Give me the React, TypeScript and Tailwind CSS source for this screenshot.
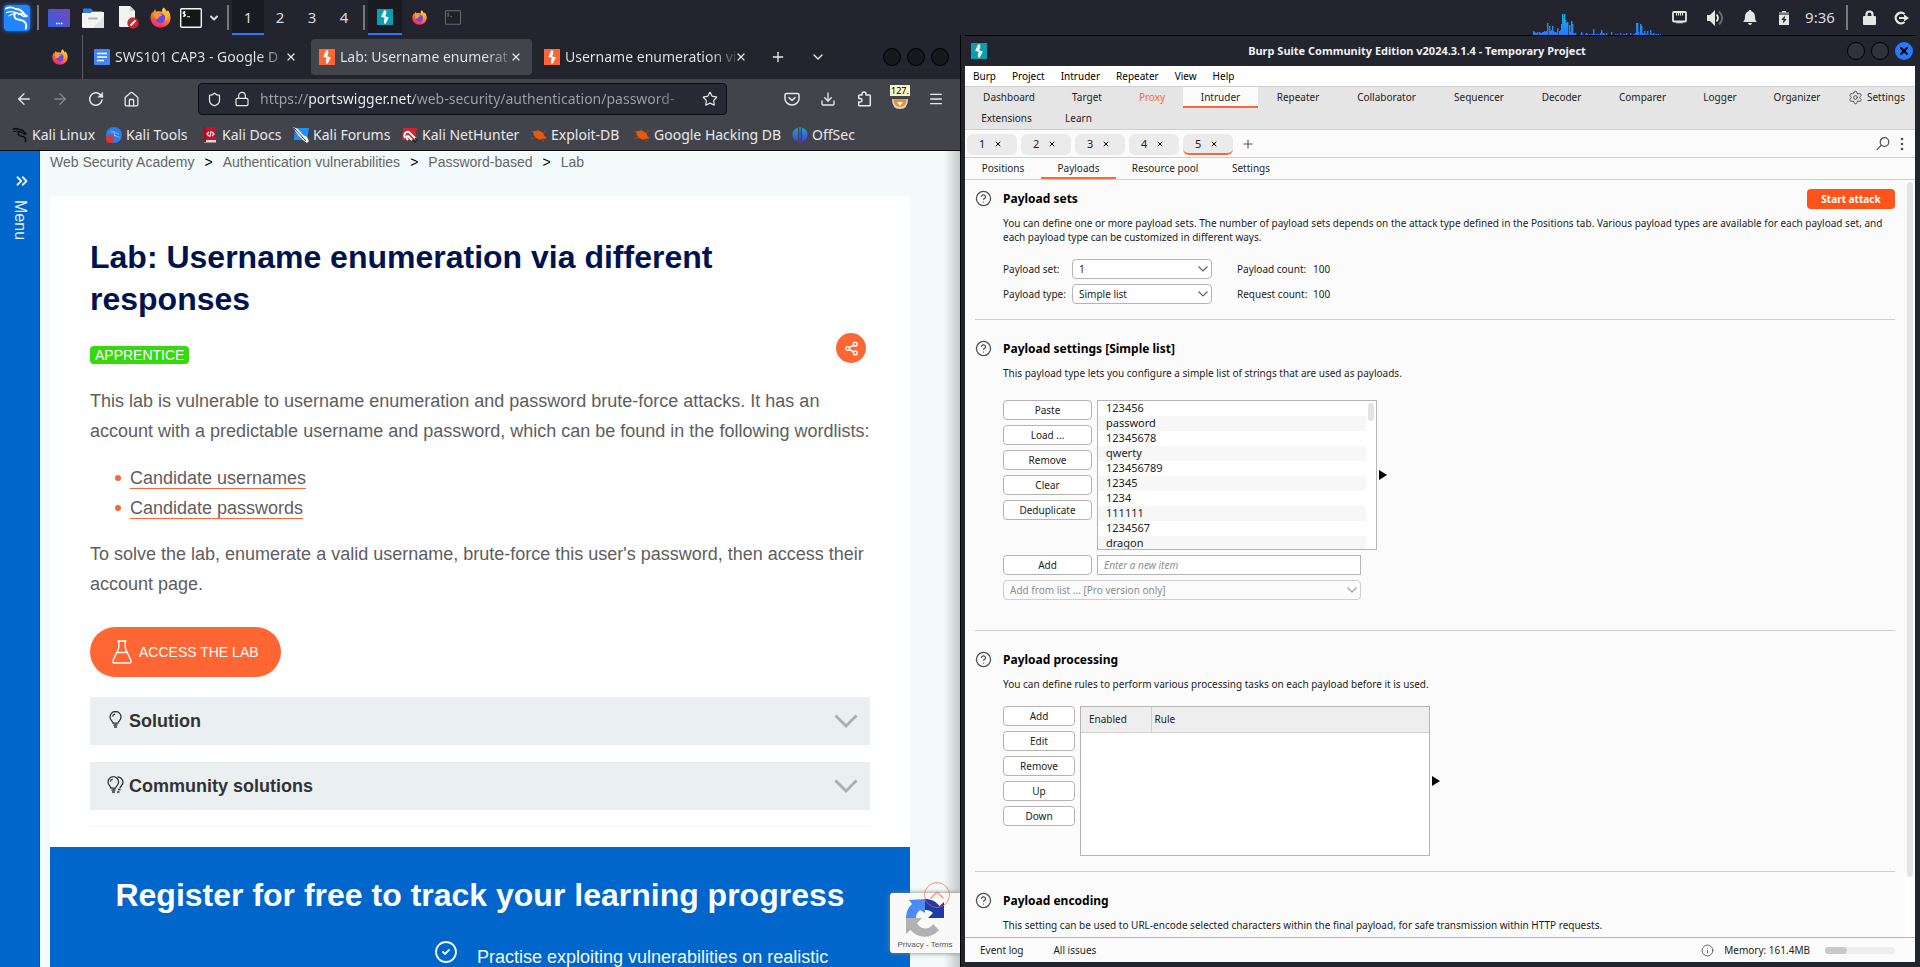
import React from "react";
import { SiKalilinux } from "react-icons/si";
import {
  ArrowLeft, ArrowRight, ChevronDown, ChevronUp, ChevronsRight, CircleCheck, CircleHelp,
  Download, House, Info, Lock, Menu, Plus, Settings, Share2, Shield, Star, X,
} from "lucide-react";

/* ---------- shared drawings ---------- */

function FirefoxLogo({ className }: { className: string }) {
  return (
    <svg viewBox="0 0 24 24" className={className} aria-hidden="true">
      <defs>
        <linearGradient id="ffFlame" x1="0.8" y1="0" x2="0.3" y2="1">
          <stop offset="0" stopColor="#ffe14d" />
          <stop offset="0.45" stopColor="#ff8a26" />
          <stop offset="0.8" stopColor="#ff3f4a" />
          <stop offset="1" stopColor="#e3248c" />
        </linearGradient>
      </defs>
      <path d="M15.5 0.5c2 1.5 3 3 3.4 4.6 1-.1 1.300-.9 1.300-1.700 2 2.200 3.300 5.600 3.300 9C23.500 18.800 18.300 23.600 12 23.600 5.500 23.600.6 18.600.6 12.400c0-2.600.9-5.200 2.200-6.900l.4 1.700C4 5 5.300 3.300 6.300 2.700c-.2 1 .1 2 .8 2.600 2.500-.6 5-.4 6.700.5C13.400 3.800 14 1.800 15.500.5z" fill="url(#ffFlame)" />
      <circle cx="12" cy="13" r="5.600" fill="#6a48e8" />
      <path d="M4.500 8.500c2-1.500 4-1.600 5.800-.6l2.600.7c.8.300.6 1.200 0 1.500l-2.200 1.100c-1 .7-.7 1.800-2.200 2.400-1 .4-2 0-2.600-.5z" fill="#ff9a2c" />
      <path d="M17 8c1.500 2.500 1 6-1 8 3-1 5-4 4.300-8z" fill="#ffb52e" />
    </svg>
  );
}

function BurpLogo({ className, color }: { className: string; color: string }) {
  return (
    <svg viewBox="0 0 16 16" className={className} aria-hidden="true">
      <rect width="16" height="16" fill={color} />
      <path d="M7 1.500h2.200v3.700L8 7.200l3.800 1.300L8.800 14.500H7v-3.700l1-1.800-3.800-1.300z" fill="#fff" />
    </svg>
  );
}

function DocsLogo() {
  return (
    <svg viewBox="0 0 16 16" className="size-4 shrink-0" aria-hidden="true">
      <rect width="16" height="16" rx="1" fill="#4285f4" />
      <path d="M3 4.500h10M3 8h10M3 11.500h7" stroke="#fff" strokeWidth="1.700" />
    </svg>
  );
}

/* ---------- desktop panel ---------- */

const load = [4, 3, 2, 2, 3, 3, 2, 2, 3, 3, 4, 3, 4, 12, 9, 4, 5, 9, 4, 3, 3, 2, 7, 4, 5, 11, 21, 17, 21, 15, 12, 13, 10, 3, 14, 11, 2, 1, 2, 0, 0, 0, 1, 3, 1, 0, 0, 1, 2, 1, 1, 0, 1, 1, 6, 1, 0, 1, 0, 1, 2, 5, 1, 2, 1, 0, 2, 0, 0, 0, 3, 0, 0, 0, 1, 0, 1, 0, 2, 0, 0, 1, 1, 0, 2, 0, 0, 2, 0, 0, 1, 1, 2, 12, 12, 3, 11, 9, 2, 1, 4, 1, 1, 4, 0, 5, 1, 1, 2, 0, 1, 1, 0, 1, 1];

function LoadGraph() {
  return (
    <svg viewBox="0 0 128 24" className="h-6 w-32 self-end" aria-hidden="true">
      <defs>
        <linearGradient id="loadFill" gradientUnits="userSpaceOnUse" x1="0" y1="24" x2="0" y2="2">
          <stop offset="0" stopColor="#2777ff" />
          <stop offset="1" stopColor="#12b7e6" />
        </linearGradient>
      </defs>
      {load.map((h, i) => (
        <rect key={i} x={Math.round(i * 1.11)} y={24 - h} width="1.400" height={h} fill="url(#loadFill)" />
      ))}
    </svg>
  );
}

function PanelDivider({ className }: { className: string }) {
  return <span className={`h-[25px] w-0.5 shrink-0 bg-[#77787d] ${className}`} />;
}

function TerminalIcon({ className, bright }: { className: string; bright: boolean }) {
  const c = bright ? "#f4f4f4" : "#6b6c72";
  return (
    <svg viewBox="0 0 22 20" className={className} aria-hidden="true">
      <rect x="0.700" y="0.700" width="20.600" height="18.600" rx="1" fill={bright ? "#16171b" : "#202127"} stroke={c} strokeWidth="1.400" />
      <path d="M5.500 4.200C4.500 3.800 3 4 3 5s2.500.8 2.500 1.900S4 8.300 3 7.900M4.300 3v6M7 8.800h3" stroke={c} strokeWidth="1.100" fill="none" />
    </svg>
  );
}

function DesktopPanel() {
  return (
    <header className="flex h-[35px] shrink-0 items-center bg-[#23242e] text-[15px] text-[#dadbe0]">
      <button aria-label="Applications" className="ml-1 flex size-[26px] items-center justify-center rounded-sm bg-[#1f86ff] shadow-[0_0_4px_#2777ff]">
        <svg viewBox="0 0 26 26" className="size-[26px]" fill="none" stroke="#fff" strokeLinecap="round" strokeLinejoin="round" aria-hidden="true">
          <path d="M2 3.500c3-1.500 7-1 9.500.5 3.500 0 7 2 9 5.500l2.500 1.500-2.800.3" strokeWidth="1.800" />
          <path d="M2.500 7.500c3-1.200 6-1.200 9 0 4 .8 6.500 2.500 8 4" strokeWidth="1.300" />
          <path d="M5 11c2-1.800 4-2.300 6-1.800" strokeWidth="1.100" />
          <path d="M11 8c-1.500 3-.5 6 3 6.500 4 .5 7 1.500 8 4.500.5 1.500.3 3-.2 4.500" strokeWidth="2" />
          <path d="M20.500 10c-1.500-1.500-4-2-6-.5" strokeWidth="1.500" />
        </svg>
      </button>
      <PanelDivider className="ml-[7px]" />
      <button aria-label="Show desktop" className="ml-[9px]">
        <svg viewBox="0 0 22 18" className="h-[18px] w-[22px]" aria-hidden="true">
          <defs><linearGradient id="desk" x1="0" y1="1" x2="1" y2="0"><stop offset="0" stopColor="#2c63e6" /><stop offset="1" stopColor="#7a47b0" /></linearGradient></defs>
          <rect width="22" height="18" rx="1" fill="url(#desk)" />
          <path d="M8 14.500h1.500M10.500 14.500H12M13 14.500h1.500" stroke="#fff" strokeWidth="1.500" />
        </svg>
      </button>
      <button aria-label="Files" className="ml-3">
        <svg viewBox="0 0 22 20" className="h-5 w-[22px]" aria-hidden="true">
          <path d="M1 1.500Q1 .5 2 .5h7l2 2.500h9v4H1z" fill="#2d7af0" />
          <path d="M0 5h8.500l1.500-1h12v15q0 1-1 1H1q-1 0-1-1z" fill="#f3f3f3" />
          <path d="M22 8v11q0 1-1 1H11z" fill="#e1e1e1" />
          <path d="M7 10.500h8" stroke="#b5b5b5" strokeWidth="2" strokeLinecap="round" />
        </svg>
      </button>
      <button aria-label="Text editor" className="ml-[14px]">
        <svg viewBox="0 0 21 23" className="h-[23px] w-[21px]" aria-hidden="true">
          <path d="M1 0h11l5 5v15q0 1-1 1H2q-1 0-1-1z" fill="#f3f3f3" />
          <path d="M12 0l5 5h-5z" fill="#cfcfcf" />
          <circle cx="15" cy="17" r="5.700" fill="#d4232b" />
          <path d="M12.500 19.500l5-5" stroke="#fff" strokeWidth="1.800" />
        </svg>
      </button>
      <button aria-label="Firefox" className="ml-[11px]"><FirefoxLogo className="size-[21px]" /></button>
      <button aria-label="Terminal" className="ml-[9px]"><TerminalIcon className="h-5 w-[22px]" bright /></button>
      <button aria-label="More launchers" className="ml-1.5"><ChevronDown className="size-3" strokeWidth={4} /></button>
      <PanelDivider className="ml-[7px]" />
      <nav aria-label="Workspaces" className="ml-[3px] flex h-full">
        <button className="w-8 border-b-2 border-[#2777ff] bg-[#1b1c23] pt-0.5">1</button>
        <button className="w-8">2</button>
        <button className="w-8">3</button>
        <button className="w-8">4</button>
      </nav>
      <PanelDivider className="ml-[3px]" />
      <button aria-label="Burp Suite" className="ml-[3px] flex h-full w-[34px] items-center justify-center border-b-2 border-[#2777ff] bg-[#1b1c23]">
        <BurpLogo className="size-4" color="#0d9db3" />
      </button>
      <button aria-label="Firefox window" className="flex w-[34px] justify-center"><FirefoxLogo className="size-[15px]" /></button>
      <button aria-label="Terminal window" className="flex w-[34px] justify-center"><TerminalIcon className="h-[15px] w-4" bright={false} /></button>

      <div className="ml-auto flex h-full items-center">
        <LoadGraph />
        <span className="flex w-9 justify-center">
          <svg viewBox="0 0 15 13" className="h-[13px] w-[15px]" aria-hidden="true">
            <rect x="1" y="1" width="13" height="9.500" rx="1" fill="none" stroke="#e6e6e6" strokeWidth="1.800" />
            <path d="M4 11.800h7M4.500 1.500v3M6.500 1.500v3M8.500 1.500v3M10.500 1.500v3" stroke="#e6e6e6" strokeWidth="1.100" />
          </svg>
        </span>
        <span className="flex w-9 justify-center">
          <svg viewBox="0 0 17 16" className="h-4 w-[17px]" aria-hidden="true">
            <path d="M0 5h3l5-5v16l-5-5H0z" fill="#e6e6e6" />
            <path d="M9.500 4.500q3 3.500 0 7" stroke="#e6e6e6" strokeWidth="1.800" fill="none" />
            <path d="M12 1.500q6.500 6.500 0 13" stroke="#6b6c72" strokeWidth="1.800" fill="none" />
          </svg>
        </span>
        <span className="flex w-[34px] justify-center">
          <svg viewBox="0 0 14 15" className="h-[15px] w-3.5" aria-hidden="true">
            <path d="M7 0c1 0 1.300.6 1.300 1.300C10.800 2 12 4 12 6.500c0 3.500.8 4.500 2 5.500H0c1.200-1 2-2 2-5.500C2 4 3.200 2 5.700 1.300 5.700.6 6 0 7 0zM5 13h4q-.5 2-2 2t-2-2z" fill="#e6e6e6" />
          </svg>
        </span>
        <span className="flex w-[34px] justify-center">
          <svg viewBox="0 0 10 14" className="h-3.5 w-2.5" aria-hidden="true">
            <path d="M3 0h4v1.500h3V14H0V1.500h3z" fill="#e6e6e6" />
            <path d="M0 1.500h10V4H0z" fill="#77787d" />
            <path d="M6 4.500L2.300 9h2.200L4 12.500 7.700 8H5.500z" fill="#23242e" />
          </svg>
        </span>
        <time className="w-[38px] text-center">9:36</time>
        <span className="flex w-4 justify-center"><PanelDivider className="" /></span>
        <button aria-label="Lock screen" className="flex w-7 justify-center">
          <svg viewBox="0 0 13 15" className="h-[15px] w-[13px]" aria-hidden="true">
            <path d="M3.500 7V4.500a3 3 0 0 1 6 0V7" fill="none" stroke="#e6e6e6" strokeWidth="2.200" />
            <rect y="6" width="13" height="9" rx="1" fill="#e6e6e6" />
          </svg>
        </button>
        <button aria-label="Log out" className="flex w-[37px] justify-center">
          <svg viewBox="0 0 15 14" className="h-3.5 w-[15px]" aria-hidden="true">
            <path d="M10.500 3A5.300 5.300 0 1 0 10.500 11" fill="none" stroke="#e6e6e6" strokeWidth="2.300" />
            <path d="M5 6h5V3.500L15 7l-5 3.500V8H5z" fill="#e6e6e6" />
          </svg>
        </button>
      </div>
    </header>
  );
}

/* ---------- browser chrome ---------- */

function BrowserTab({ title, icon, active }: { title: string; icon: React.ReactNode; active: boolean }) {
  return (
    <div className={`flex h-9 w-[221px] items-center rounded px-2 ${active ? "bg-[#42444c]" : ""}`}>
      {icon}
      <span className="ml-[5px] min-w-0 flex-1 whitespace-nowrap bg-linear-to-r from-[#e8e8ea] from-85% to-[#e8e8ea]/20 bg-clip-text text-sm text-transparent">{title}</span>
      <button aria-label={`Close ${title}`} className="mr-0.5"><X className="size-3 text-[#e8e8ea]" strokeWidth={2.500} /></button>
    </div>
  );
}

function ExploitIcon() {
  return (
    <svg viewBox="0 0 16 16" className="size-4" aria-hidden="true">
      <path d="M0 4l5 2M2 8h3M0 12l5-2M7 2l1 4M15 3l-3 4M9 13l-1-2M16 10l-3 0M13 15l-2-4" stroke="#b8450f" strokeWidth="0.900" />
      <path d="M2 4.500l4-1 3 .5 3 2 1.500 3 2 3-3-.5-3.500 1-4-1.500-2-3z" fill="#ea580c" />
    </svg>
  );
}

function DragonIcon() {
  return (
    <svg viewBox="0 0 26 26" className="size-4" fill="none" stroke="#0c0d10" strokeLinecap="round" strokeLinejoin="round" aria-hidden="true">
      <path d="M2 3.500c3-1.500 7-1 9.500.5 3.500 0 7 2 9 5.500l2.500 1.500-2.800.3" strokeWidth="2.300" />
      <path d="M2.500 7.500c3-1.200 6-1.200 9 0 4 .8 6.500 2.500 8 4" strokeWidth="1.800" />
      <path d="M11 8c-1.500 3-.5 6 3 6.500 4 .5 7 1.500 8 4.500.5 1.500.3 3-.2 4.500" strokeWidth="2.600" />
    </svg>
  );
}

const bookmarks: { name: string; icon: React.ReactNode; width: string }[] = [
  { name: "Kali Linux", width: "w-[94px]", icon: <DragonIcon /> },
  {
    name: "Kali Tools", width: "w-[96px]", icon: (
      <span className="relative flex size-4 items-center justify-center rounded-full bg-[#2b7de9]">
        <SiKalilinux className="size-3 text-white" />
        <span className="absolute bottom-0 left-0 size-2 rounded-full bg-[#e0342c]" />
      </span>
    ),
  },
  {
    name: "Kali Docs", width: "w-[91px]", icon: (
      <svg viewBox="0 0 16 16" className="size-4" aria-hidden="true">
        <path d="M2 0h12v13H2z" fill="#c8102a" /><path d="M2 13h12v2.500H2z" fill="#e8d8d8" /><path d="M2 0h2v15H2z" fill="#a00d20" />
        <path d="M7 5L5 7l2 2M10 5l2 2-2 2M9.200 4L7.800 10" stroke="#fff" strokeWidth="1.100" fill="none" />
      </svg>
    ),
  },
  {
    name: "Kali Forums", width: "w-[109px]", icon: (
      <svg viewBox="0 0 16 16" className="size-4" aria-hidden="true">
        <path d="M2 1h14l-2 12H1z" fill="#1f8fff" /><path d="M0 0l5 2 5 6 4 2 2 4-2 2-4-3-5-5z" fill="#f4f4f4" /><path d="M1 1l12 13" stroke="#333" strokeWidth="0.900" />
      </svg>
    ),
  },
  {
    name: "Kali NetHunter", width: "w-[129px]", icon: (
      <svg viewBox="0 0 16 16" className="size-4" aria-hidden="true">
        <path d="M1 1h14l-2 12H0z" fill="#d4232b" />
        <path d="M3 11c-2-4 1-7 4-6l7 7M6 13c-2-2-2-4 0-4l4 4" stroke="#fff" strokeWidth="1.900" fill="none" />
        <path d="M11 13l3 3M13 11l3 3" stroke="#222" strokeWidth="1.500" />
      </svg>
    ),
  },
  { name: "Exploit-DB", width: "w-[103px]", icon: <ExploitIcon /> },
  { name: "Google Hacking DB", width: "w-[158px]", icon: <ExploitIcon /> },
  {
    name: "OffSec", width: "w-[70px]", icon: (
      <svg viewBox="0 0 16 16" className="size-4" aria-hidden="true">
        <defs><linearGradient id="off" x1="0" y1="0" x2="0" y2="1"><stop offset="0" stopColor="#12a9c9" /><stop offset="1" stopColor="#5a2be0" /></linearGradient></defs>
        <path d="M6 .8v14A7.200 7.200 0 0 1 6 .8zM10 .8v14A7.200 7.200 0 0 0 10 .8zM7.400 0h1.200v16H7.400z" fill="url(#off)" />
      </svg>
    ),
  },
];

function BrowserChrome() {
  return (
    <div className="shrink-0 text-[#e8e8ea]">
      <div className="flex h-11 items-center bg-[#22242e]">
        <div className="flex h-full w-[83px] items-center justify-end border-r border-[#5a5b63] pr-3.5"><FirefoxLogo className="size-4" /></div>
        <div className="ml-[3px] flex items-center gap-1">
          <BrowserTab title="SWS101 CAP3 - Google D" active={false} icon={<DocsLogo />} />
          <BrowserTab title="Lab: Username enumerat" active icon={<BurpLogo className="size-4 shrink-0" color="#ff6633" />} />
          <BrowserTab title="Username enumeration vi" active={false} icon={<BurpLogo className="size-4 shrink-0" color="#ff6633" />} />
        </div>
        <button aria-label="New tab" className="ml-[13px]"><Plus className="size-4" /></button>
        <button aria-label="List all tabs" className="ml-6"><ChevronDown className="size-4" /></button>
        <div className="ml-auto mr-[11px] flex gap-1.5">
          <button aria-label="Minimize" className="size-[18px] rounded-full border border-black bg-[#17181e]" />
          <button aria-label="Maximize" className="size-[18px] rounded-full border border-black bg-[#17181e]" />
          <button aria-label="Close window" className="size-[18px] rounded-full border border-black bg-[#17181e]" />
        </div>
      </div>
      <div className="flex h-10 items-center bg-[#42444c]">
        <button aria-label="Back" className="ml-[15px]"><ArrowLeft className="size-[18px]" strokeWidth={1.700} /></button>
        <button aria-label="Forward" className="ml-[18px] text-[#85868c]"><ArrowRight className="size-[18px]" strokeWidth={1.700} /></button>
        <button aria-label="Reload" className="ml-[19px]">
          <svg viewBox="0 0 16 16" className="size-4" fill="none" stroke="currentColor" strokeWidth="1.500" strokeLinecap="round" aria-hidden="true">
            <path d="M14 9A6.200 6.200 0 1 1 12.300 3.700L14.500 5.700" /><path d="M14.700 1.500v4.700H10z" fill="currentColor" strokeWidth="0.500" />
          </svg>
        </button>
        <button aria-label="Home" className="ml-[19px]"><House className="size-[17px]" strokeWidth={1.800} /></button>
        <div className="ml-[58px] flex h-8 w-[529px] items-center rounded border border-[#0d0e12] bg-[#272934] px-2">
          <Shield className="size-[15px] shrink-0" strokeWidth={2} />
          <Lock className="ml-3 size-4 shrink-0" strokeWidth={1.800} />
          <input
            aria-label="Address"
            defaultValue="https://portswigger.net/web-security/authentication/password-"
            className="ml-2.5 min-w-0 flex-1 bg-[linear-gradient(to_right,#a0a1a8_48px,#f4f4f6_48px,#f4f4f6_154px,#a0a1a8_154px,#a0a1a8_395px,#50525c_425px)] bg-clip-text text-sm text-transparent"
          />
          <button aria-label="Bookmark" className="ml-1"><Star className="size-4" strokeWidth={1.800} /></button>
        </div>
        <div className="ml-auto mr-4 flex items-center gap-5">
          <button aria-label="Pocket">
            <svg viewBox="0 0 16 16" className="size-4" fill="none" stroke="currentColor" strokeWidth="1.500" strokeLinecap="round" aria-hidden="true">
              <path d="M2.500 2.500h11q1.500 0 1.500 1.500v3.500a7 6.500 0 0 1-14 0V4q0-1.500 1.500-1.500zM5 6.500l3 3 3-3" />
            </svg>
          </button>
          <button aria-label="Downloads"><Download className="size-4" strokeWidth={2} /></button>
          <button aria-label="Extensions">
            <svg viewBox="0 0 16 16" className="size-4" fill="none" stroke="currentColor" strokeWidth="1.500" strokeLinejoin="round" aria-hidden="true">
              <path d="M6 4V3a2 2 0 0 1 4 0v1h3.500q.8 0 .8.800v9.200q0 .8-.8.800H3.500q-.8 0-.8-.8v-3h1.500a1.600 1.600 0 0 0 0-3.500H2.700V4.800Q2.700 4 3.500 4z" />
            </svg>
          </button>
          <button aria-label="FoxyProxy" className="relative flex h-5 w-4 items-end justify-center">
            <svg viewBox="0 0 16 12" className="h-3 w-4" aria-hidden="true">
              <path d="M0 2h16q0 10-8 10T0 2z" fill="#d7d7d7" /><path d="M1.500 2h13q0 8-6.500 8T1.500 2z" fill="#e8902a" /><path d="M5 5l3 4 3-4z" fill="#fff" />
            </svg>
            <span className="absolute -left-0.5 -top-1 bg-[#fdf6c4] px-px text-[9px] leading-[11px] text-black">127.</span>
          </button>
          <button aria-label="Menu"><Menu className="size-4" strokeWidth={2} /></button>
        </div>
      </div>
      <nav aria-label="Bookmarks" className="flex h-8 items-center overflow-hidden whitespace-nowrap border-b border-[#0d0e12] bg-[#42444c] pl-3 text-sm">
        {bookmarks.map((b) => (
          <a key={b.name} href="#" className={`flex shrink-0 items-center gap-1 ${b.width}`}>{b.icon}{b.name}</a>
        ))}
      </nav>
    </div>
  );
}

/* ---------- web page ---------- */

function Bulb({ double }: { double: boolean }) {
  return (
    <svg viewBox="0 0 17 17" className="size-[17px]" fill="none" stroke="#333332" strokeWidth="1.300" aria-hidden="true">
      <path d={double ? "M4 12.200c0-2.200-3-2.800-3-6.200a5.300 5.300 0 0 1 10.600 0c0 3.400-3 4-3 6.200zM4.500 14h4M5 16h3M3.300 5.500a3 3 0 0 1 2.500-2.300M10.500 1a5.300 5.300 0 0 1 5.500 5.300c0 3-3 3.700-3 6M11 13.500h2.500M10 16h2.500" : "M6 12.200c0-2.200-3-2.800-3-6.200a5.500 5.500 0 0 1 11 0c0 3.400-3 4-3 6.200zM6.500 14h4M7 16h3M5.500 5.500a3 3 0 0 1 2.500-2.300"} />
    </svg>
  );
}

function Accordion({ title, double }: { title: string; double: boolean }) {
  return (
    <button className="flex h-12 w-full items-center bg-[#eaeff2] pl-[17px] pr-3 text-lg font-bold text-[#333332]">
      <span className="mb-1"><Bulb double={double} /></span>
      <span className="ml-[5px]">{title}</span>
      <svg viewBox="0 0 24 14" className="ml-auto h-3.5 w-6" aria-hidden="true"><path d="M1.500 1.500L12 12 22.500 1.500" fill="none" stroke="#adadad" strokeWidth="2.800" /></svg>
    </button>
  );
}

function WebPage() {
  const crumb = "text-[#666]";
  return (
    <div className="relative flex min-h-0 flex-1 overflow-hidden bg-[#f2fafc] font-['Liberation_Sans',Arial,sans-serif]">
      <button className="flex w-10 shrink-0 flex-col items-center border-r border-[#0056b3] bg-[#0066cc] pt-[21px] text-base text-[#e3effb]">
        <ChevronsRight className="ml-1 size-[18px]" strokeWidth={2.500} />
        <span className="mt-2.5 [writing-mode:vertical-rl]">Menu</span>
      </button>
      <main className="mb-[-200px] ml-2.5 mr-[50px] min-w-0 flex-1">
        <nav aria-label="Breadcrumb" className="flex h-[45px] gap-2.5 text-sm leading-[22px] text-black">
          <a href="#" className={crumb}>Web Security Academy</a><span>&gt;</span>
          <a href="#" className={crumb}>Authentication vulnerabilities</a><span>&gt;</span>
          <a href="#" className={crumb}>Password-based</a><span>&gt;</span>
          <a href="#" className={crumb}>Lab</a>
        </nav>
        <article className="bg-white px-10 pb-5 pt-10 text-lg leading-[30px] text-[#5e5e5e]">
          <h1 className="text-[32px] font-bold leading-[42px] text-[#001350]">Lab: Username enumeration via different responses</h1>
          <div className="mt-[13px] flex h-[31px] justify-between">
            <span className="self-end rounded bg-[#37d80d] px-[5px] text-sm leading-[18px] text-white">APPRENTICE</span>
            <button aria-label="Share" className="mr-1 flex size-[30px] items-center justify-center rounded-full bg-[#ff6633]">
              <Share2 className="size-[15px] text-white" strokeWidth={2.300} />
            </button>
          </div>
          <p className="mt-[22px]">This lab is vulnerable to username enumeration and password brute-force attacks. It has an account with a predictable username and password, which can be found in the following wordlists:</p>
          <ul className="mt-[17px] pl-[25px]">
            {["Candidate usernames", "Candidate passwords"].map((t) => (
              <li key={t} className="flex h-[30px] items-center gap-[9px]">
                <span className="size-1.5 rounded-full bg-[#ff6633]" />
                <a href="#" className="border-b border-[#ff6633] leading-5">{t}</a>
              </li>
            ))}
          </ul>
          <p className="mt-4">To solve the lab, enumerate a valid username, brute-force this user's password, then access their account page.</p>
          <a href="#" className="mt-7 flex h-[50px] w-[191px] items-center rounded-full bg-[#ff6633] pl-[22px] text-sm text-white">
            <svg viewBox="0 0 20 24" className="mr-[7px] h-6 w-5" fill="none" stroke="#fff" strokeWidth="1.400" strokeLinejoin="round" aria-hidden="true">
              <path d="M5.500 1h9M6.800 1v7L1 20.500Q.3 23 2.500 23h15q2.200 0 1.500-2.500L13.200 8V1M4.500 12.500h11" />
            </svg>
            ACCESS THE LAB
          </a>
          <div className="mt-5 flex flex-col gap-[17px] border-b border-[#f3f3f3] pb-4">
            <Accordion title="Solution" double={false} />
            <Accordion title="Community solutions" double />
          </div>
        </article>
        <section className="bg-[#0066cc] pb-20 pt-7 text-white">
          <h2 className="whitespace-nowrap text-center text-[32px] font-bold leading-10">Register for free to track your learning progress</h2>
          <ul className="mt-[25px] pl-[384px] text-lg leading-[30px] text-[#f2f7fd]">
            <li className="flex whitespace-nowrap"><CircleCheck className="mr-[19px] size-6" strokeWidth={1.800} /><span className="mt-0.5">Practise exploiting vulnerabilities on realistic</span></li>
          </ul>
        </section>
      </main>
      <div className="pointer-events-none absolute inset-y-0 right-0 w-4 bg-linear-to-l from-black/20 to-transparent" />
      <aside className="absolute bottom-3.5 right-0 flex h-[60px] w-[70px] flex-col items-center rounded-l-[3px] bg-[#f9f9f9] pt-1.5 shadow-[0_0_5px_gray]">
        <svg viewBox="0 0 38 38" className="size-[38px]" aria-hidden="true">
          <path d="M19 0v14l-5-3a10 10 0 0 0-4 8H0A18.500 18.500 0 0 1 6 5L3 1z" fill="#4a8bf5" />
          <path d="M19 0c6 0 11 2.500 14.500 7L38 3v16H22l5-5a9 9 0 0 0-8-3z" fill="#1c3aa9" />
          <path d="M0 19h16l-5 5a9 9 0 0 0 16 1l6 6A18.500 18.500 0 0 1 4.500 31L0 35z" fill="#b1b1b1" />
        </svg>
        <span className="mt-0.5 text-[8px] leading-3 text-[#555]"><a href="#">Privacy</a> - <a href="#">Terms</a></span>
      </aside>
      <button aria-label="Back to top" className="absolute bottom-[59px] right-2.5 flex size-[26px] items-center justify-center rounded-full border border-[#ff6633]/70 text-[#ff6633]/70">
        <ChevronUp className="size-6" strokeWidth={1.400} />
      </button>
    </div>
  );
}

/* ---------- Burp Suite ---------- */

const mainTabs: [string, string][] = [
  ["Dashboard", "w-[88px]"], ["Target", "w-[68px]"], ["Proxy", "w-[62px]"], ["Intruder", "w-[75px]"],
  ["Repeater", "w-[80px]"], ["Collaborator", "w-[97px]"], ["Sequencer", "w-[88px]"], ["Decoder", "w-[77px]"],
  ["Comparer", "w-[85px]"], ["Logger", "w-[70px]"], ["Organizer", "w-[84px]"],
];
const words = ["123456", "password", "12345678", "qwerty", "123456789", "12345", "1234", "111111", "1234567", "dragon"];

function PanelButton({ children }: { children: React.ReactNode }) {
  return <button className="h-5 w-full rounded border border-[#b7b3b3] bg-white text-center leading-4">{children}</button>;
}

function Section({ title, text, children, first, last, action }: { title: string; text: string; children?: React.ReactNode; first?: boolean; last?: boolean; action?: React.ReactNode }) {
  return (
    <section className={`ml-2.5 mr-2.5 flex items-start gap-[11px] ${first ? "pt-2.5" : "pt-5"} ${last ? "" : "border-b border-[#cfcfcf]"}`}>
      <CircleHelp className="size-[17px] shrink-0 text-[#505050]" strokeWidth={1.800} />
      <div className="min-w-0 flex-1">
        <div className="flex h-[18px] items-center justify-between">
          <h2 className="text-xs font-bold text-black">{title}</h2>
          {action}
        </div>
        <p className="mt-2 leading-[14px]">{text}</p>
        {children}
      </div>
    </section>
  );
}

function Dropdown({ id, value, muted }: { id: string; value: string; muted?: boolean }) {
  return (
    <span className="relative block">
      <select id={id} aria-label={value} disabled={muted} className={`block h-5 w-full appearance-none rounded-sm border pl-1.5 leading-4 ${muted ? "border-[#cfcfcf] bg-[#fbfbfb] text-[#8e8e8e] opacity-100" : "border-[#b7b3b3] bg-white"}`}>
        <option>{value}</option>
      </select>
      <svg viewBox="0 0 10 6" className={`pointer-events-none absolute right-1 top-[7px] h-1.5 w-2.5 ${muted ? "text-[#a0a0a0]" : "text-[#606060]"}`} fill="none" stroke="currentColor" strokeWidth="1.100" aria-hidden="true">
        <path d="M.5.5L5 5 9.500.5" />
      </svg>
    </span>
  );
}

function Arrow() {
  return <svg viewBox="0 0 8 10" className="ml-0.5 h-2.5 w-2 self-center" aria-hidden="true"><path d="M0 0l8 5-8 5z" fill="#000" /></svg>;
}

function BurpWindow() {
  return (
    <div className="flex min-w-0 flex-1 flex-col border-l border-black bg-[#22242e] pb-[5px] pl-1 pr-[5px] text-[10px] text-[#1d1d1d]">
      <div className="flex h-[31px] shrink-0 items-center border-t border-black">
        <BurpLogo className="ml-1.5 size-4" color="#0d9db3" />
        <span className="flex-1 text-center text-[11px] font-bold text-[#f0f0f2]">Burp Suite Community Edition v2024.3.1.4 - Temporary Project</span>
        <div className="mr-0.5 flex gap-1.5">
          <button aria-label="Minimize" className="size-[18px] rounded-full border border-black bg-[#2f323d]" />
          <button aria-label="Maximize" className="size-[18px] rounded-full border border-black bg-[#2f323d]" />
          <button aria-label="Close" className="flex size-[18px] items-center justify-center rounded-full bg-[#2777ff]"><X className="size-3 text-black" strokeWidth={4} /></button>
        </div>
      </div>

      <nav aria-label="Menu bar" className="flex h-[21px] shrink-0 items-center gap-4 border-b border-[#cfcfcf] bg-white pl-2 text-black">
        {["Burp", "Project", "Intruder", "Repeater", "View", "Help"].map((m) => <button key={m}>{m}</button>)}
      </nav>

      <div className="shrink-0 border-b border-[#cfcfcf] bg-[#e5e5e5]">
        <div className="flex h-[21px]">
          {mainTabs.map(([name, w]) => (
            <button key={name} className={`${w} ${name === "Intruder" ? "border-b-2 border-[#ff6633] bg-[#fbfbfb] pt-0.5" : name === "Proxy" ? "text-[#ff6633]" : ""}`}>{name}</button>
          ))}
          <button className="ml-auto flex items-center gap-1 pr-2.5"><Settings className="size-[15px] text-[#505050]" strokeWidth={1.600} />Settings</button>
        </div>
        <div className="flex h-[21px]">
          <button className="w-[83px]">Extensions</button>
          <button className="w-[61px]">Learn</button>
        </div>
      </div>

      <div className="flex h-7 shrink-0 items-center gap-1 border-b border-[#cfcfcf] bg-[#fbfbfb] pl-0.5 pr-[11px] pt-px">
        {["1", "2", "3", "4", "5"].map((n) => (
          <div key={n} className={`flex h-[21px] w-[50px] items-center gap-[9px] rounded-md bg-[#ebebeb] pl-3 text-[11px] ${n === "5" ? "border-b-2 border-[#ff6633] pt-0.5" : ""}`}>
            <button>{n}</button>
            <button aria-label={`Close tab ${n}`}><X className="size-2 text-black" strokeWidth={3} /></button>
          </div>
        ))}
        <button aria-label="Add tab" className="ml-1"><Plus className="size-3.5 text-[#505050]" strokeWidth={1.800} /></button>
        <button aria-label="Search" className="ml-auto">
          <svg viewBox="0 0 14 14" className="size-3.5" fill="none" stroke="#505050" strokeWidth="1.200" aria-hidden="true"><circle cx="8.500" cy="5" r="4.300" /><path d="M5.500 8L.8 12.800" /></svg>
        </button>
        <button aria-label="More" className="ml-1.5">
          <svg viewBox="0 0 4 14" className="h-3.5 w-1" aria-hidden="true"><circle cx="2" cy="2" r="1.300" fill="#505050" /><circle cx="2" cy="7" r="1.300" fill="#505050" /><circle cx="2" cy="12" r="1.300" fill="#505050" /></svg>
        </button>
      </div>

      <div className="flex h-[22px] shrink-0 border-b border-[#cfcfcf] bg-[#fbfbfb]">
        <button className="w-[76px]">Positions</button>
        <button className="w-[75px] border-b-2 border-[#ff6633] pt-0.5">Payloads</button>
        <button className="w-[98px]">Resource pool</button>
        <button className="w-[74px]">Settings</button>
      </div>

      <div className="flex min-h-0 flex-1 overflow-hidden bg-[#fbfbfb]">
        <div className="mb-[-100px] min-w-0 flex-1">
          <Section
            first
            title="Payload sets"
            text="You can define one or more payload sets. The number of payload sets depends on the attack type defined in the Positions tab. Various payload types are available for each payload set, and each payload type can be customized in different ways."
            action={<button className="h-5 w-[88px] rounded bg-[#ff5419] font-bold text-white">Start attack</button>}
          >
            <div className="mb-[15px] mt-[15px] grid grid-cols-[69px_140px_76px_60px] items-center gap-y-[5px]">
              <label htmlFor="payload-set">Payload set:</label><Dropdown id="payload-set" value="1" />
              <span className="ml-[25px] whitespace-nowrap">Payload count:</span><span className="ml-[25px]">100</span>
              <label htmlFor="payload-type">Payload type:</label><Dropdown id="payload-type" value="Simple list" />
              <span className="ml-[25px] whitespace-nowrap">Request count:</span><span className="ml-[25px]">100</span>
            </div>
          </Section>

          <Section title="Payload settings [Simple list]" text="This payload type lets you configure a simple list of strings that are used as payloads.">
            <div className="mt-5 flex gap-[5px]">
              <div className="flex w-[89px] flex-col gap-[5px]">
                {["Paste", "Load ...", "Remove", "Clear", "Deduplicate"].map((b) => <PanelButton key={b}>{b}</PanelButton>)}
              </div>
              <div className="flex">
                <div className="flex h-[150px] w-[280px] overflow-hidden border border-[#b7b3b3] bg-white">
                  <ul className="mb-[-10px] flex-1 text-[11px]">
                    {words.map((w) => <li key={w} className="h-[15px] pl-2 leading-[14px] even:bg-[#f7f7f7]">{w}</li>)}
                  </ul>
                  <div className="w-2.5 pt-0.5"><div className="ml-0.5 h-[18px] w-1.5 rounded-full bg-[#e4e4e4]" /></div>
                </div>
                <Arrow />
              </div>
            </div>
            <div className="mt-[5px] flex gap-[5px]">
              <div className="w-[89px]"><PanelButton>Add</PanelButton></div>
              <input aria-label="Enter a new item" placeholder="Enter a new item" className="h-5 w-[264px] border border-[#b7b3b3] bg-white px-1.5 italic placeholder:text-[#8e8e8e]" />
            </div>
            <div className="mb-[30px] mt-[5px] w-[358px]"><Dropdown id="add-from" value="Add from list ... [Pro version only]" muted /></div>
          </Section>

          <Section title="Payload processing" text="You can define rules to perform various processing tasks on each payload before it is used.">
            <div className="mb-[15px] mt-[15px] flex gap-[5px]">
              <div className="flex w-[72px] flex-col gap-[5px]">
                {["Add", "Edit", "Remove", "Up", "Down"].map((b) => <PanelButton key={b}>{b}</PanelButton>)}
              </div>
              <div className="flex">
                <div className="h-[150px] w-[350px] border border-[#b7b3b3] bg-white">
                  <table className="w-full table-fixed border-collapse text-left">
                    <thead>
                      <tr className="h-[25px] border-b border-[#cfcfcf] bg-[#eee]">
                        <th className="w-[70px] border-r border-[#cfcfcf] pl-2 font-normal">Enabled</th>
                        <th className="pl-[3px] font-normal">Rule</th>
                      </tr>
                    </thead>
                  </table>
                </div>
                <Arrow />
              </div>
            </div>
          </Section>

          <Section title="Payload encoding" text="This setting can be used to URL-encode selected characters within the final payload, for safe transmission within HTTP requests." last />
        </div>
        <div className="w-2.5 shrink-0 bg-white pl-0.5 pt-0.5"><div className="h-[92%] w-1.5 rounded-full bg-[#e4e4e4]" /></div>
      </div>

      <footer className="flex h-[25px] shrink-0 items-center border-t border-[#b7b3b3] bg-[#fbfbfb] pl-[15px] pr-5">
        <button>Event log</button>
        <button className="ml-[30px]">All issues</button>
        <Info className="ml-auto size-[13px] text-[#606060]" strokeWidth={1.800} />
        <span className="ml-2.5">Memory: 161.4MB</span>
        <div className="ml-[15px] h-[7px] w-[70px] rounded-full bg-[#eee]"><div className="h-full w-[22px] rounded-full bg-[#c8c8c8]" /></div>
      </footer>
    </div>
  );
}

export default function App() {
  return (
    <div className="flex h-screen flex-col overflow-hidden bg-[#1a1b21] font-['Noto_Sans',sans-serif]">
      <DesktopPanel />
      <div className="flex min-h-0 flex-1">
        <div className="flex w-1/2 flex-col">
          <BrowserChrome />
          <WebPage />
        </div>
        <BurpWindow />
      </div>
    </div>
  );
}
